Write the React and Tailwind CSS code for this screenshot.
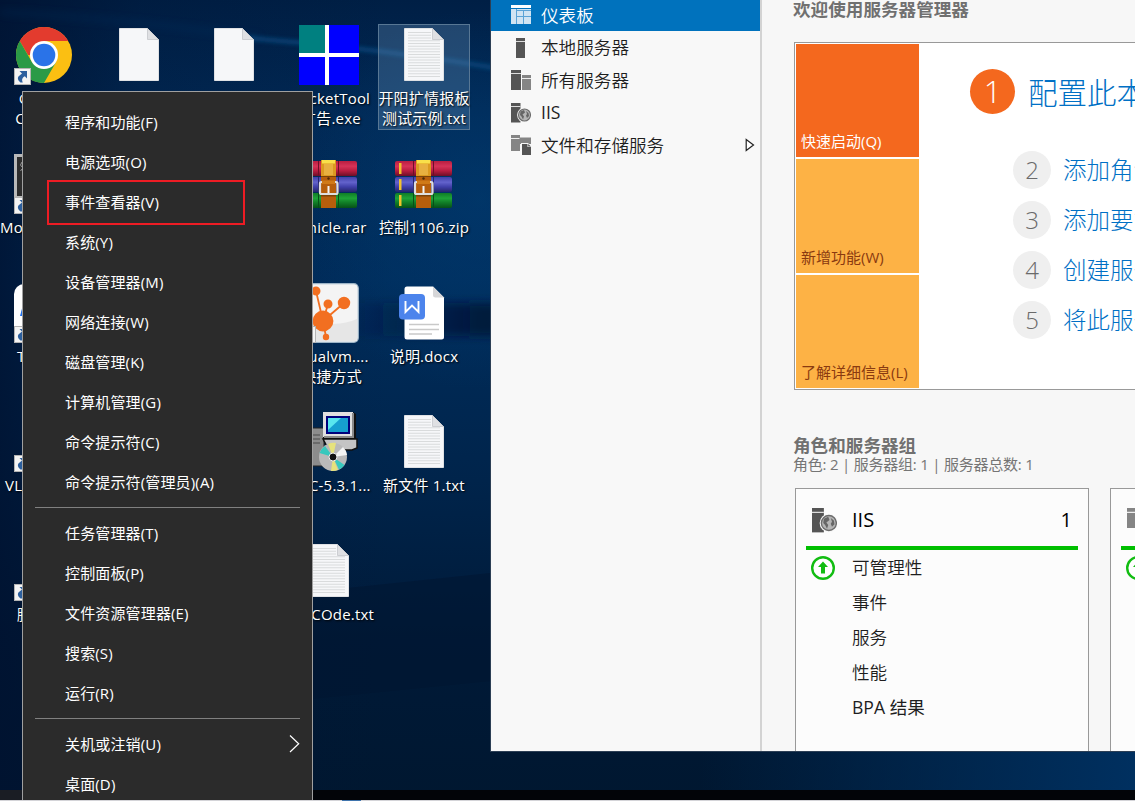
import React from "react";

const FONT = "font-['Open_Sans','Noto_Sans_CJK_SC',sans-serif]";

/* ---------- desktop icons ---------- */

function ShortcutBadge() {
  return (
    <svg className="absolute left-0 bottom-0 size-[17px]" viewBox="0 0 17 17">
      <rect x="0.5" y="0.5" width="16" height="16" fill="#f4f4f4" stroke="#b4b4b4" />
      <path d="M5.500 3H13V10.500L10.800 8.300C8.500 9.500 7.300 11.500 8.800 14.500H6.500C3.500 12 3.300 9.500 5 8C6 7 7 6.500 8 5.500Z" fill="#2c5f9e" />
    </svg>
  );
}

function Chrome() {
  return (
    <svg className="size-14" viewBox="-28 -28 56 56">
      <circle r="28" fill="#fbbf12" />
      <path d="M-24.250 -14A28 28 0 0 1 24.250 -14H0V0H-16Z" fill="#e33b2e" />
      <path d="M-24.250 -14A28 28 0 0 0 0 28L12.120 7L0 0L-12.120 7Z" fill="#2a9a47" />
      <circle r="14" fill="#fff" />
      <circle r="11.300" fill="#2a73e8" />
    </svg>
  );
}

function Doc({ lines }) {
  return (
    <svg className="h-[54px] w-10" viewBox="0 0 40 54">
      <path d="M0.500 0.500H28.500L39.500 11.500V52.500H0.500Z" fill="#f6f7f9" stroke="#dfe1e4" />
      {lines &&
        Array.from({ length: 17 }, (_, i) => (
          <path key={i} d={`M4 ${4.5 + i * 2.75}H${i < 3 ? 27 : 36}`} stroke="#d9dbdc" strokeWidth="1" />
        ))}
      <path d="M28.500 0.500V11.500H39.500Z" fill="#dfe0e3" stroke="#c4c6ca" strokeWidth="0.800" />
    </svg>
  );
}

function Panes() {
  return (
    <svg className="size-[60px]" viewBox="0 0 60 60" shapeRendering="crispEdges">
      <rect width="60" height="60" fill="#fff" />
      <rect width="26" height="28" fill="#008080" />
      <rect x="30" width="30" height="28" fill="#0000ff" />
      <rect y="32" width="26" height="28" fill="#0000ff" />
      <rect x="30" y="32" width="30" height="28" fill="#0000ff" />
    </svg>
  );
}

function Book({ id, y, light, base, dark }) {
  return (
    <g transform={`translate(0 ${y})`}>
      <linearGradient id={id} x1="0" y1="0" x2="0" y2="1">
        <stop offset="0" stopColor={base} />
        <stop offset="0.350" stopColor={light} />
        <stop offset="0.650" stopColor={base} />
        <stop offset="1" stopColor={dark} />
      </linearGradient>
      <rect width="57" height="15" rx="2" fill={`url(#${id})`} />
      <rect x="4" y="2" width="2.500" height="11" fill="#f2c32d" />
      <rect x="18" width="1" height="15" fill={dark} />
      <rect x="38" width="1" height="15" fill={dark} />
    </g>
  );
}

function Archive({ id }) {
  return (
    <svg className="h-12 w-[58px]" viewBox="0 0 58 48">
      <Book id={`${id}-r`} y={1} light="#d63358" base="#b91d40" dark="#6d0f28" />
      <Book id={`${id}-b`} y={17} light="#6363cc" base="#4040aa" dark="#25256a" />
      <Book id={`${id}-g`} y={33} light="#1ea438" base="#107c26" dark="#075018" />
      <rect x="21" width="15" height="48" fill="#b65e0c" />
      <rect x="21" width="15" height="16" fill="#dc9a20" />
      <rect x="24" y="4" width="9" height="11" fill="#e8b040" />
      <rect x="22" width="13" height="3.500" fill="#f9e04a" />
      <rect x="21" y="16" width="15" height="1" fill="#7c4208" />
      <rect x="21" y="34.500" width="15" height="2" fill="#7c4208" />
      <circle cx="28.500" cy="18.500" r="1.200" fill="#4e2a06" />
      <rect x="20" y="22" width="17.500" height="12" rx="1.500" fill="none" stroke="#dedede" strokeWidth="2.200" />
      <rect x="22" y="20.500" width="13" height="3.500" fill="#d07a18" />
      <path d="M28.500 26V33" stroke="#f4f4f4" strokeWidth="2" />
    </svg>
  );
}

function Molecule() {
  return (
    <svg className="size-[60px]" viewBox="0 0 60 60">
      <rect x="0.700" y="0.700" width="58.600" height="58.600" rx="4.500" fill="#f4f4f4" stroke="#9db4c6" strokeWidth="1.200" />
      <path d="M2 30Q30 48 58 36V56Q58 58 56 58H4Q2 58 2 56Z" fill="#e6e6e6" />
      <g stroke="#f26f21" strokeWidth="1.800" fill="#f26f21">
        <path d="M24 38L17 8M24 38L29 21M24 38L45 20M24 38L27 54" />
        <circle cx="17" cy="8" r="3.600" />
        <circle cx="29" cy="21" r="3.600" />
        <circle cx="45" cy="20" r="5.300" />
        <circle cx="24" cy="38" r="9.500" />
        <circle cx="27" cy="54" r="2.300" />
      </g>
    </svg>
  );
}

function WordDoc() {
  return (
    <svg className="mr-1 h-[54px] w-[46px]" viewBox="0 0 46 54">
      <path d="M8 0.500H34L45 11.500V51Q45 53.500 42.500 53.500H8Q5.500 53.500 5.500 51V3Q5.500 0.500 8 0.500Z" fill="#fff" />
      <path d="M34 0.500V9Q34 11.500 36.500 11.500H45Z" fill="#d6d6d8" />
      <path d="M10 38.500H40M10 43.500H40M10 48H33" stroke="#c9c9c9" strokeWidth="1.500" />
      <rect x="0" y="8" width="26" height="25.500" rx="4" fill="#4c84ec" />
      <path d="M6.500 15V26L13 19.500L19.500 26V15" fill="none" stroke="#fff" strokeWidth="1.900" />
    </svg>
  );
}

function Installer() {
  return (
    <svg className="size-[60px]" viewBox="0 0 60 60">
      <path d="M5 20L10 16H25V54H5Z" fill="#8c8c8c" stroke="#222" />
      <path d="M8 23H21M8 27H21M8 31H21" stroke="#4a4a4a" />
      <path d="M24 0H54L57 2V27H24Z" fill="#111" />
      <path d="M24 0H54V25H24Z" fill="#e0e0e0" />
      <path d="M54 1V25H25" fill="none" stroke="#8a8a8a" strokeWidth="2" />
      <rect x="27" y="4" width="24" height="18" fill="#00007c" />
      <rect x="29" y="6" width="20" height="14" fill="#169fd0" />
      <path d="M29 6H42L29 18Z" fill="#58e6ee" />
      <path d="M24 27H58V36L53 38H30Z" fill="#c4c4c4" stroke="#111" strokeWidth="1.500" />
      <circle cx="34" cy="45" r="14" fill="#b9b9b9" />
      <path d="M34 45L29 32A14 14 0 0 1 37 31Z" fill="#e6e27c" />
      <path d="M34 45L20.500 41A14 14 0 0 1 26 34Z" fill="#37c8bd" />
      <path d="M34 45L39 58A14 14 0 0 1 32 59Z" fill="#e6e27c" />
      <path d="M34 45L45.500 53A14 14 0 0 1 40 57.500Z" fill="#37c8bd" />
      <path d="M34 45L44 35A14 14 0 0 1 48 43Z" fill="#f3f3f3" />
      <circle cx="34" cy="45" r="4" fill="#111" stroke="#eee" />
    </svg>
  );
}

function Terminal() {
  return (
    <svg className="size-[60px]" viewBox="0 0 60 60">
      <rect width="60" height="60" fill="#b9b9b9" />
      <rect x="3" y="3" width="54" height="39" fill="#2d2d2d" />
      <path d="M8 8L6.500 11L8 13M8 15L6.500 17" stroke="#999" fill="none" />
    </svg>
  );
}

function WhiteApp() {
  return (
    <svg className="size-[60px]" viewBox="0 0 60 60">
      <rect y="1" width="60" height="59" rx="10" fill="#fff" />
      <path d="M6 33L10 18H20L15 33Z" fill="#1d6ff0" />
    </svg>
  );
}

function DesktopItem({ place, icon, lines = [], labelClass = "items-center", selected, shortcut }) {
  return (
    <div className={`${place} pl-[2px]`}>
      <div
        className={`flex h-[106px] w-[92px] flex-col border ${
          selected ? "border-[#587794] bg-[#6f9cc4]/30" : "border-transparent"
        }`}
      >
        <div className="relative mx-auto flex size-[60px] items-center justify-center">
          {icon}
          {shortcut && <ShortcutBadge />}
        </div>
        <div
          className={`mt-[3px] flex flex-col whitespace-nowrap text-[15px] leading-5 tracking-[0.2px] text-white [text-shadow:1px_1px_2px_#000] ${labelClass}`}
        >
          {lines.map((t) => (
            <span key={t}>{t}</span>
          ))}
        </div>
      </div>
    </div>
  );
}

function Desktop() {
  return (
    <div className="absolute left-0 top-0 -ml-1 grid auto-cols-[95px] grid-rows-[repeat(5,129px)] pt-6">
      <DesktopItem place="col-start-1 row-start-1" icon={<Chrome />} lines={["Google", "Chrome"]} shortcut />
      <DesktopItem place="col-start-1 row-start-2" icon={<Terminal />} lines={["Mo"]} labelClass="items-start pl-px" shortcut />
      <DesktopItem place="col-start-1 row-start-3" icon={<WhiteApp />} lines={["T"]} labelClass="items-start pl-[18px]" shortcut />
      <DesktopItem place="col-start-1 row-start-4" lines={["VL"]} labelClass="items-start pl-1.5" shortcut />
      <DesktopItem place="col-start-1 row-start-5" lines={["腾"]} labelClass="items-start pl-[18px]" shortcut />
      <DesktopItem place="col-start-2 row-start-1" icon={<Doc />} />
      <DesktopItem place="col-start-3 row-start-1" icon={<Doc />} />
      <DesktopItem place="col-start-4 row-start-1" icon={<Panes />} lines={["SocketTool", "广告.exe"]} labelClass="items-center pl-1" />
      <DesktopItem place="col-start-4 row-start-2" icon={<Archive id="rar" />} lines={["vehicle.rar"]} />
      <DesktopItem place="col-start-4 row-start-3" icon={<Molecule />} lines={["jvisualvm....", "- 快捷方式"]} labelClass="items-center -ml-1" shortcut />
      <DesktopItem place="col-start-4 row-start-4" icon={<Installer />} lines={["VNC-5.3.1..."]} labelClass="items-center pl-px" />
      <DesktopItem place="col-start-4 row-start-5" icon={<Doc lines />} lines={["QRCOde.txt"]} labelClass="items-center pl-1.5" />
      <DesktopItem place="col-start-5 row-start-1" icon={<Doc lines />} lines={["开阳扩情报板", "测试示例.txt"]} selected />
      <DesktopItem place="col-start-5 row-start-2" icon={<Archive id="zip" />} lines={["控制1106.zip"]} />
      <DesktopItem place="col-start-5 row-start-3" icon={<WordDoc />} lines={["说明.docx"]} />
      <DesktopItem place="col-start-5 row-start-4" icon={<Doc lines />} lines={["新文件 1.txt"]} />
    </div>
  );
}

function Wallpaper() {
  return (
    <svg className="absolute inset-0 size-full" viewBox="0 0 1135 801" preserveAspectRatio="none">
      <defs>
        <linearGradient id="base" x1="0" y1="0" x2="0" y2="1">
          <stop offset="0" stopColor="#001f45" />
          <stop offset="0.150" stopColor="#012a57" />
          <stop offset="0.350" stopColor="#002d5c" />
          <stop offset="0.600" stopColor="#00244b" />
          <stop offset="0.800" stopColor="#001a38" />
          <stop offset="1" stopColor="#001730" />
        </linearGradient>
        <linearGradient id="left" x1="0" y1="0" x2="0.350" y2="0">
          <stop offset="0" stopColor="#001230" stopOpacity="0.800" />
          <stop offset="0.350" stopColor="#001230" stopOpacity="0.200" />
          <stop offset="1" stopColor="#001230" stopOpacity="0" />
        </linearGradient>
        <radialGradient id="glow" cx="480" cy="200" r="190" gradientUnits="userSpaceOnUse">
          <stop offset="0" stopColor="#013c72" stopOpacity="0.600" />
          <stop offset="1" stopColor="#013c72" stopOpacity="0" />
        </radialGradient>
        <linearGradient id="band" x1="340" y1="0" x2="480" y2="0" gradientUnits="userSpaceOnUse">
          <stop offset="0" stopColor="#001538" stopOpacity="0" />
          <stop offset="1" stopColor="#001538" stopOpacity="0.850" />
        </linearGradient>
        <linearGradient id="foot" x1="700" y1="0" x2="1135" y2="0" gradientUnits="userSpaceOnUse">
          <stop offset="0" stopColor="#003060" stopOpacity="0" />
          <stop offset="1" stopColor="#003060" />
        </linearGradient>
        <filter id="soft" x="-20%" y="-50%" width="140%" height="200%">
          <feGaussianBlur stdDeviation="4" />
        </filter>
        <filter id="ray" x="-20%" y="-50%" width="140%" height="200%">
          <feGaussianBlur stdDeviation="2" />
        </filter>
      </defs>
      <rect width="1135" height="801" fill="url(#base)" />
      <rect width="1135" height="801" fill="url(#left)" />
      <rect x="290" width="210" height="420" fill="url(#glow)" />
      <path d="M0 12Q140 20 260 38" stroke="#0a437a" strokeWidth="3" opacity="0.350" fill="none" filter="url(#soft)" />
      <path d="M220 36Q370 46 520 72" stroke="#0f548f" strokeWidth="4" opacity="0.700" fill="none" filter="url(#ray)" />
      <path d="M330 303H520V336H330Z" fill="url(#band)" filter="url(#soft)" />
      <path d="M300 593L500 572V680L300 700Z" fill="#001631" opacity="0.550" />
      <rect x="700" y="751" width="435" height="40" fill="url(#foot)" />
    </svg>
  );
}

/* ---------- server manager ---------- */

function DashboardIcon() {
  return (
    <svg className="size-5" viewBox="0 0 20 20" shapeRendering="crispEdges">
      <rect width="20" height="3" fill="#fff" />
      <rect y="4" width="20" height="15" fill="#cfe4f3" />
      <path d="M5.500 4V19M12.500 6V19M6 5.500H20M6 11.500H20" stroke="#5aa3d6" />
    </svg>
  );
}

function LocalServerIcon() {
  return (
    <svg className="size-5" viewBox="0 0 20 20" shapeRendering="crispEdges">
      <rect x="5" width="9" height="20" fill="#555" />
      <rect x="5" y="3" width="9" height="1" fill="#ddd" />
    </svg>
  );
}

function AllServersIcon() {
  return (
    <svg className="size-5" viewBox="0 0 20 20" shapeRendering="crispEdges">
      <rect width="10" height="20" fill="#555" />
      <rect y="3" width="10" height="1" fill="#ddd" />
      <rect x="11" y="5" width="9" height="15" fill="#858585" />
      <rect x="11" y="8" width="9" height="1" fill="#eee" />
    </svg>
  );
}

function IisIcon({ size = "size-5" }) {
  return (
    <svg className={size} viewBox="0 0 20 20">
      <rect width="9.500" height="19.500" fill="#555" />
      <rect y="3" width="9.500" height="1" fill="#ddd" />
      <circle cx="13.500" cy="12" r="7.400" fill="#f8f8f8" />
      <circle cx="13.500" cy="12" r="6" fill="#b5b5b5" stroke="#6c6c6c" strokeWidth="1.100" />
      <path d="M9.500 8.500L13 7L14 9.500L11.500 11.500L13 13.500L12 16.500L10.500 13.500L9 12ZM15 8L17.500 10L18 13L16 15L15 12.500L16 11Z" fill="#666" />
    </svg>
  );
}

function StorageIcon({ size = "size-5" }) {
  return (
    <svg className={size} viewBox="0 0 20 20">
      <rect width="9" height="16" fill="#858585" />
      <rect y="3" width="9" height="1" fill="#eee" />
      <path d="M8.500 2.500H20V9H8.500Z" fill="#858585" />
      <path d="M10 8H17L20.500 11.500V20H10Z" fill="#f8f8f8" />
      <path d="M11 9H16.500V12H20V20H11Z" fill="#555" />
      <path d="M17.200 9L20 11.500H17.200Z" fill="#555" />
    </svg>
  );
}

function NavRow({ icon, label, active, arrow, weight = "font-[350]" }) {
  return (
    <div className={`flex h-8 items-center pl-5 pr-[5px] text-[17.6px] ${active ? "text-white" : "text-[#1e1e1e]"}`}>
      {icon}
      <span className={`ml-2.5 flex-1 whitespace-nowrap ${weight}`}>{label}</span>
      {arrow && (
        <svg className="h-3.5 w-2.5" viewBox="0 0 10 14">
          <path d="M1.200 1.500L8.500 7L1.200 12.500Z" fill="#fff" stroke="#222" strokeWidth="1.200" />
        </svg>
      )}
    </div>
  );
}

function Sidebar() {
  return (
    <nav className="box-content flex w-[269px] shrink-0 flex-col gap-[0.5px] border-r-2 border-[#d3d3d3] bg-[#f8f8f8]">
      <div className="-mt-px bg-[#0072bd]">
        <NavRow icon={<DashboardIcon />} label="仪表板" active />
      </div>
      <NavRow icon={<LocalServerIcon />} label="本地服务器" />
      <NavRow icon={<AllServersIcon />} label="所有服务器" />
      <NavRow icon={<IisIcon />} label="IIS" weight="font-normal" />
      <NavRow icon={<StorageIcon />} label="文件和存储服务" arrow />
    </nav>
  );
}

function Tile({ label, className }) {
  return <div className={`flex h-[113.400px] items-end pb-1.5 pl-[5px] text-[15px] leading-5 ${className}`}>{label}</div>;
}

function Step({ n, label }) {
  return (
    <div className="flex h-[50px] items-center">
      <span className="flex size-[38px] shrink-0 items-center justify-center rounded-full bg-[#efefef] text-2xl font-light text-[#6a6a6a]">
        {n}
      </span>
      <span className="ml-3 whitespace-nowrap pt-0.5 text-[23.500px] font-light text-[#0070c5]">{label}</span>
    </div>
  );
}

function Welcome() {
  return (
    <div className="ml-px mt-6 flex h-[348px] w-[420px] shrink-0 border border-[#999] bg-white">
      <div className="flex w-[124px] shrink-0 flex-col gap-[2px] pl-px pt-px">
        <Tile label="快速启动(Q)" className="bg-[#f4681e] text-white" />
        <Tile label="新增功能(W)" className="bg-[#fdb245] text-[#8a3a10]" />
        <Tile label="了解详细信息(L)" className="bg-[#fdb245] text-[#8a3a10]" />
      </div>
      <div className="pl-[51px] pt-[26px]">
        <div className="flex h-11 items-center">
          <span className="flex size-[45px] shrink-0 items-center justify-center rounded-full bg-[#f4681e] text-[31px] font-light text-white">
            1
          </span>
          <span className="ml-[13px] whitespace-nowrap pt-1 text-[29.500px] font-light text-[#0070c5]">配置此本地服务器</span>
        </div>
        <div className="mt-8 pl-[43px]">
          <Step n="2" label="添加角色和功能" />
          <Step n="3" label="添加要管理的其他服务器" />
          <Step n="4" label="创建服务器组" />
          <Step n="5" label="将此服务器连接到云服务" />
        </div>
      </div>
    </div>
  );
}

function RoleCard({ icon, name, rows }) {
  return (
    <section className="w-[294px] shrink-0 border border-b-0 border-[#999] bg-[#fcfcfc] px-2.5 pt-[14px] text-[#1e1e1e]">
      <header className="box-content flex h-[43px] items-center border-b-4 border-[#00bf00] pl-1.5 pr-[6px] text-xl text-black">
        <span className="-mt-2 flex w-[26px]">{icon}</span>
        <span className="-mt-[9px] ml-[14px] flex-1">{name}</span>
        <span className="-mt-[9px]">1</span>
      </header>
      <ul className="text-[17.6px]">
        {rows.map((r, i) => (
          <li key={r} className={`flex h-[35px] items-center ${r.startsWith("BPA") ? "font-normal" : "font-[350]"}`}>
            <span className="flex w-[46px] pl-1">
              {i === 0 && (
                <svg className="size-[26px]" viewBox="0 0 26 26">
                  <circle cx="13" cy="13" r="10.800" fill="#fff" stroke="#12bd12" strokeWidth="2.400" />
                  <path d="M13 6.500L18 12H15V18.500H11V12H8Z" fill="#12bd12" />
                </svg>
              )}
            </span>
            {r}
          </li>
        ))}
      </ul>
    </section>
  );
}

function ServerManager() {
  return (
    <div className="absolute left-[490px] top-0 flex h-[752px] w-[645px] overflow-hidden border-b border-l border-[#2c3f55] bg-[#f7f7f7]">
      <Sidebar />
      <main className="flex min-w-0 flex-1 flex-col pl-[31px]">
        <h1 className="h-[18px] shrink-0 whitespace-nowrap text-[17.6px] font-bold leading-[18px] text-[#707070]">
          欢迎使用服务器管理器
        </h1>
        <Welcome />
        <h2 className="mt-[45px] h-5 shrink-0 whitespace-nowrap text-[17.6px] font-bold leading-5 text-[#707070]">角色和服务器组</h2>
        <p className="h-5 shrink-0 whitespace-nowrap text-[15px] leading-[19px] tracking-[-0.22px] text-[#757575]">
          角色: 2 | 服务器组: 1 | 服务器总数: 1
        </p>
        <div className="ml-[2px] mt-[13px] flex min-h-0 flex-1 gap-[21px]">
          <RoleCard icon={<IisIcon size="size-[25px]" />} name="IIS" rows={["可管理性", "事件", "服务", "性能", "BPA 结果"]} />
          <RoleCard icon={<StorageIcon size="size-[25px]" />} name="文件和存储服务" rows={["可管理性"]} />
        </div>
      </main>
    </div>
  );
}

/* ---------- quick link menu ---------- */

const GROUPS = [
  [
    "程序和功能(F)",
    "电源选项(O)",
    "事件查看器(V)",
    "系统(Y)",
    "设备管理器(M)",
    "网络连接(W)",
    "磁盘管理(K)",
    "计算机管理(G)",
    "命令提示符(C)",
    "命令提示符(管理员)(A)",
  ],
  ["任务管理器(T)", "控制面板(P)", "文件资源管理器(E)", "搜索(S)", "运行(R)"],
  ["关机或注销(U)", "桌面(D)"],
];

function QuickMenu() {
  return (
    <div className="absolute left-[22px] top-[91px] h-[709px] w-[291px] overflow-hidden border border-b-0 border-[#a0a0a0] bg-[#2b2b2b] pt-[11px] text-[15px] tracking-[0.15px] text-white">
      {GROUPS.map((items, g) => (
        <div key={g}>
          {g > 0 && <div className="mx-3 mb-1.5 mt-1 h-px bg-[#808080]" />}
          {items.map((t) => (
            <div key={t} className="flex h-10 items-center justify-between pb-[2px] pl-[42px] pr-3">
              <span className="whitespace-nowrap">{t}</span>
              {t.startsWith("关机") && (
                <svg className="h-[18px] w-[11px]" viewBox="0 0 11 18">
                  <path d="M1 0.500L9.700 8.700L1 17" fill="none" stroke="#fff" strokeWidth="1.200" />
                </svg>
              )}
            </div>
          ))}
        </div>
      ))}
      <div className="absolute left-6 top-[88px] h-[45px] w-[198px] border-2 border-[#ed1c24]" />
    </div>
  );
}

export default function App() {
  return (
    <div className={`relative h-[801px] w-[1135px] overflow-hidden bg-[#001b3d] ${FONT}`}>
      <Wallpaper />
      <Desktop />
      <ServerManager />
      <div className="absolute inset-x-0 bottom-0 flex h-[11px] flex-col bg-[#020408]">
        <div className="h-2.5 w-[22px] bg-[#1a1d24]" />
        <div className="h-px bg-[#d4d4d8] pl-[342px]">
          <div className="h-px w-[19px] bg-[#3f74ad]" />
        </div>
      </div>
      <QuickMenu />
    </div>
  );
}
